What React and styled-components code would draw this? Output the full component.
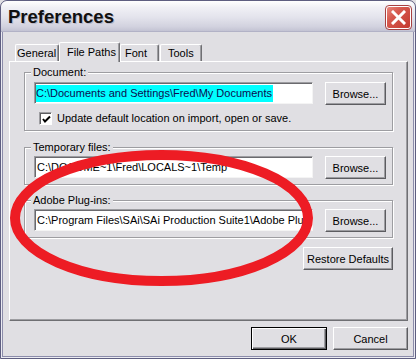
import React from "react";
import styled, { createGlobalStyle } from "styled-components";

const GlobalStyle = createGlobalStyle`
  html, body {
    margin: 0;
    padding: 0;
    background: #e0dfe3;
  }
  body {
    font-family: "Liberation Sans", Arial, sans-serif;
    font-size: 11px;
    color: #000;
  }
`;

const App = () => {
  return (
    <>
      <GlobalStyle />
      <Window>
        <TitleBar>
          <Title>Preferences</Title>
          <CloseButton aria-label="Close">
            <svg width="15" height="15" viewBox="0 0 15 15">
              <path d="M2 2 L13 13 M13 2 L2 13" stroke="#fff" strokeWidth="3" strokeLinecap="square" />
            </svg>
          </CloseButton>
        </TitleBar>
        <Client>
          <TabStrip>
            <Tab $w={44} $pad={1}>General</Tab>
            <Tab $w={61} $pad={7} $active>File Paths</Tab>
            <Tab $w={39} $pad={4}>Font</Tab>
            <Tab $w={42} $pad={7} $gap={1}>Tools</Tab>
          </TabStrip>
          <Panel>
            <Group $top={10} $padTop={9}>
              <Legend>Document:</Legend>
              <Row>
                <TextBox>
                  <Selected>C:\Documents and Settings\Fred\My Documents</Selected>
                </TextBox>
                <Button $w={61}>Browse...</Button>
              </Row>
              <CheckRow>
                <CheckBox>
                  <svg width="9" height="9" viewBox="0 0 9 9">
                    <path d="M1 4 L3 6.5 L8 1.5" stroke="#000" strokeWidth="2" fill="none" />
                  </svg>
                </CheckBox>
                <span>Update default location on import, open or save.</span>
              </CheckRow>
            </Group>
            <Group $top={16} $padTop={8}>
              <Legend>Temporary files:</Legend>
              <Row>
                <TextBox>C:\DOCUME~1\Fred\LOCALS~1\Temp</TextBox>
                <Button $w={61}>Browse...</Button>
              </Row>
            </Group>
            <Group $top={15} $padTop={8}>
              <Legend>Adobe Plug-ins:</Legend>
              <Row>
                <TextBox>C:\Program Files\SAi\SAi Production Suite1\Adobe Plug-ins</TextBox>
                <Button $w={61}>Browse...</Button>
              </Row>
            </Group>
            <RestoreRow>
              <Button $w={90}>Restore Defaults</Button>
            </RestoreRow>
          </Panel>
          <Footer>
            <Button $w={76} $default>OK</Button>
            <Button $w={75}>Cancel</Button>
          </Footer>
        </Client>
        <Annotation width="416" height="359" viewBox="0 0 416 359">
          <ellipse cx="161.5" cy="218" rx="146.5" ry="63" fill="none" stroke="#ed1c24" strokeWidth="10" />
        </Annotation>
      </Window>
    </>
  );
};

const Window = styled.div`
  position: relative;
  box-sizing: border-box;
  width: 416px;
  height: 359px;
  overflow: hidden;
  background: #e0dfe3;
  border: 1px solid #5e5e80;
  border-radius: 7px 7px 0 0;
  box-shadow: inset 0 0 0 1px #ebebf2, inset 0 0 0 2px #8c8caa;
  display: flex;
  flex-direction: column;
`;

const TitleBar = styled.div`
  height: 30px;
  flex-shrink: 0;
  display: flex;
  align-items: center;
  justify-content: space-between;
  padding: 0 4px 0 7px;
  border-radius: 6px 6px 0 0;
  background: linear-gradient(
    to bottom,
    #ffffff 0%,
    #f1f1f6 20%,
    #e3e3ec 55%,
    #d2d2df 85%,
    #c3c3d3 100%
  );
  border-bottom: 1px solid #b2b2c6;
`;

const Title = styled.div`
  font-family: "Liberation Sans", Arial, sans-serif;
  font-weight: bold;
  font-size: 18.5px;
  color: #111;
  text-shadow: 1px 1px 0 #b9b9c9;
  padding-top: 1px;
`;

const CloseButton = styled.div`
  width: 25px;
  height: 23px;
  box-sizing: border-box;
  margin-top: 2px;
  border: 1px solid #fff;
  border-radius: 3px;
  outline: 1px solid #a84040;
  background: linear-gradient(135deg, #e7877c 0%, #d6594e 35%, #c4392f 100%);
  display: flex;
  align-items: center;
  justify-content: center;
`;

const Client = styled.div`
  padding: 0 0 0 8px;
  display: flex;
  flex-direction: column;
`;

const TabStrip = styled.div`
  margin-top: 10px;
  height: 19px;
  padding-left: 6px;
  display: flex;
  align-items: flex-end;
  position: relative;
  z-index: 1;
`;

const Tab = styled.div`
  box-sizing: border-box;
  width: ${({ $w }) => $w}px;
  margin-left: ${({ $gap }) => ($gap ? $gap : 0)}px;
  height: ${({ $active }) => ($active ? 20 : 17)}px;
  margin-bottom: ${({ $active }) => ($active ? -1 : 0)}px;
  padding-left: ${({ $pad }) => $pad}px;
  padding-top: ${({ $active }) => ($active ? 3 : 2)}px;
  line-height: 13px;
  background: #e0dfe3;
  border-top: 1px solid #fff;
  border-left: 1px solid #fff;
  border-right: 1px solid #6f6f73;
  border-radius: 2px 2px 0 0;
  box-shadow: inset -1px 0 0 #9d9da1;
  white-space: nowrap;
`;

const Panel = styled.div`
  box-sizing: border-box;
  width: 399px;
  height: 260px;
  padding: 0 14px;
  background: #e0dfe3;
  border: 1px solid;
  border-color: #fff #6f6f73 #6f6f73 #fff;
  box-shadow: inset -1px -1px 0 #9d9da1;
  display: flex;
  flex-direction: column;
`;

const Group = styled.div`
  position: relative;
  margin-top: ${({ $top }) => $top}px;
  padding: ${({ $padTop }) => $padTop}px 6px 5px 9px;
  border: 1px solid #9d9da1;
  box-shadow: inset 1px 1px 0 #fff, 1px 1px 0 #fff;
`;

const Legend = styled.span`
  position: absolute;
  top: -7px;
  left: 6px;
  padding: 0 2px;
  line-height: 13px;
  background: #e0dfe3;
`;

const Row = styled.div`
  display: flex;
  align-items: flex-start;
  justify-content: space-between;
`;

const TextBox = styled.div`
  box-sizing: border-box;
  width: 279px;
  height: 22px;
  padding: 2px 2px 0 2px;
  line-height: 16px;
  background: #fff;
  border: 1px solid;
  border-color: #9d9da1 #f4f4f4 #f4f4f4 #9d9da1;
  box-shadow: inset 1px 1px 0 #6a6a6e;
  white-space: nowrap;
  overflow: hidden;
`;

const Selected = styled.span`
  display: inline-block;
  background: #00ffff;
  color: #0c0c50;
  padding: 0 1px 0 0;
  margin-left: -1px;
  line-height: 17px;
`;

const Button = styled.div`
  box-sizing: border-box;
  width: ${({ $w }) => $w}px;
  height: 23px;
  display: flex;
  align-items: center;
  justify-content: center;
  background: #e0dfe3;
  border: 1px solid;
  border-color: ${({ $default }) => ($default ? "#000" : "#fff #5c5c60 #5c5c60 #fff")};
  box-shadow: ${({ $default }) =>
    $default
      ? "inset 1px 1px 0 #fff, inset -1px -1px 0 #5c5c60, inset -2px -2px 0 #9d9da1"
      : "inset -1px -1px 0 #9d9da1"};
  white-space: nowrap;
`;

const CheckRow = styled.div`
  display: flex;
  align-items: center;
  gap: 5px;
  margin-top: 7px;
  padding-left: 5px;
  height: 13px;
  line-height: 13px;
`;

const CheckBox = styled.div`
  box-sizing: border-box;
  width: 13px;
  height: 13px;
  background: #fff;
  border: 1px solid;
  border-color: #9d9da1 #fff #fff #9d9da1;
  box-shadow: inset 1px 1px 0 #5c5c60;
  display: flex;
  align-items: center;
  justify-content: center;
  padding: 1px 0 0 1px;
`;

const RestoreRow = styled.div`
  display: flex;
  justify-content: flex-end;
  margin-top: 9px;
`;

const Footer = styled.div`
  width: 399px;
  margin-top: 6px;
  display: flex;
  justify-content: flex-end;
  gap: 6px;
`;

const Annotation = styled.svg`
  position: absolute;
  left: -1px;
  top: -1px;
  pointer-events: none;
`;

export default App;
